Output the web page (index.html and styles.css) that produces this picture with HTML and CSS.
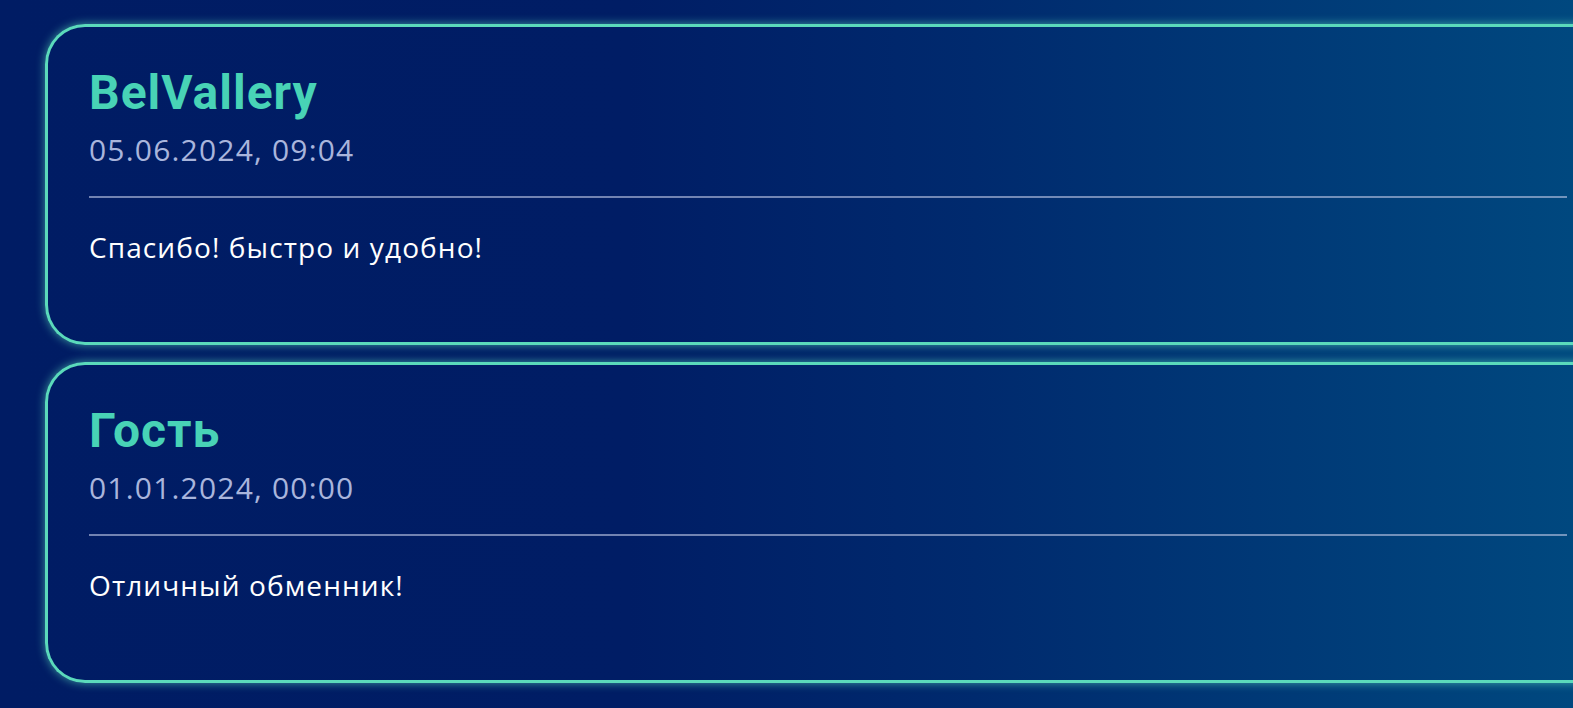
FILE: index.html
```html
<!DOCTYPE html>
<html lang="ru">
<head>
    <meta charset="UTF-8">
    <meta name="viewport" content="width=device-width, initial-scale=1.0">
    <title>Отзывы</title>
    <link rel="stylesheet" href="styles.css">
</head>
<body>
    <div class="reviews">
        <div class="review">
            <h3 class="review-name">BelVallery</h3>
            <div class="review-date">05.06.2024, 09:04</div>
            <div class="review-line"></div>
            <p class="review-text">Спасибо! быстро и удобно!</p>
        </div>
        <div class="review">
            <h3 class="review-name">Гость</h3>
            <div class="review-date">01.01.2024, 00:00</div>
            <div class="review-line"></div>
            <p class="review-text">Отличный обменник!</p>
        </div>
    </div>
</body>
</html>
```

FILE: styles.css
```css
html, body {
    height: 100%;
}

body {
    margin: 0;
    padding: 0;
    background: linear-gradient(90deg, #001c64 0%, #001d65 40%, #002a6e 62%, #00487f 100%);
    color: #ffffff;
    font-family: 'Open Sans', 'Noto Sans', sans-serif;
    overflow: hidden;
}

.reviews {
    display: flex;
    flex-direction: column;
    gap: 17px;
    padding: 24px 0 0 45px;
}

.review {
    box-sizing: border-box;
    width: 1568px;
    height: 321px;
    flex-shrink: 0;
    border: 3px solid #5bdabb;
    border-right: none;
    border-radius: 40px 0 0 40px;
    padding: 38px 0 0 41px;
    box-shadow: 0 0 10px rgba(91, 218, 187, 0.65);
}

.review-name {
    margin: 0;
    font-family: 'Roboto', sans-serif;
    font-weight: 700;
    font-size: 48px;
    line-height: 56px;
    letter-spacing: 1px;
    color: #48d3b6;
}

.review-date {
    margin-top: 11px;
    font-size: 30px;
    line-height: 36px;
    letter-spacing: 1.2px;
    color: #a9b5dc;
}

.review-line {
    width: 1478px;
    height: 2px;
    margin-top: 28px;
    background-color: rgba(190, 200, 230, 0.6);
}

.review-text {
    margin: 32px 0 0;
    font-size: 28px;
    line-height: 34px;
    letter-spacing: 1.1px;
    color: #ffffff;
}
```
